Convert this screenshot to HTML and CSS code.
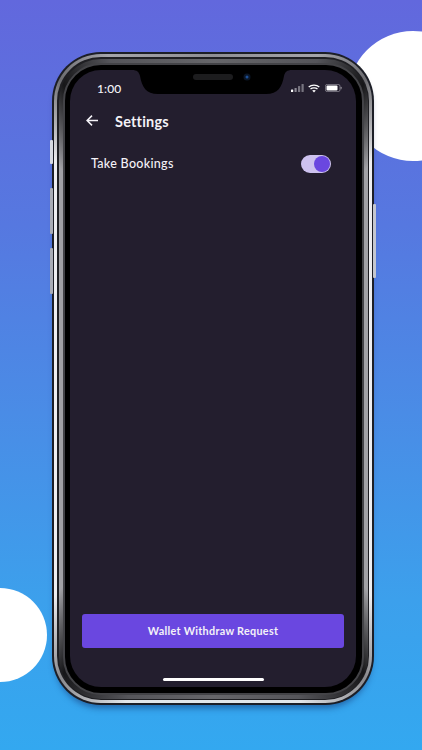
FILE: index.html
```html
<!DOCTYPE html>
<html lang="en">
<head>
<meta charset="utf-8">
<title>Settings</title>
<link rel="stylesheet" href="styles.css">
</head>
<body>
<svg class="backdrop" width="422" height="750" viewBox="0 0 422 750" aria-hidden="true">
  <circle cx="413" cy="96" r="65" fill="#fff"/>
  <circle cx="0" cy="635" r="47" fill="#fff"/>
</svg>
<main class="phone">
  <span class="key key-mute"></span>
  <span class="key key-up"></span>
  <span class="key key-down"></span>
  <span class="key key-power"></span>
  <div class="rim">
    <div class="groove">
      <div class="band">
        <div class="bezel">
          <div class="screen">
            <svg class="notch" viewBox="0 0 160 24" width="160" height="24" aria-hidden="true">
              <path d="M0 0H160C155 0 153 2 152 6C150 17 146 24 134 24H26C14 24 10 17 8 6C7 2 5 0 0 0Z" fill="#000"/>
              <rect x="61" y="4" width="40" height="6" rx="3" fill="#1c1c1e"/>
              <circle cx="115" cy="7" r="3.5" fill="#0b1626"/>
              <circle cx="115" cy="7" r="1.5" fill="#1d4f96"/>
            </svg>
            <div class="status">
              <span class="time">1:00</span>
              <div class="status-icons">
                <svg width="13" height="8" viewBox="0 0 13 8" aria-hidden="true">
                  <rect x="0" y="5.5" width="2.2" height="2.5" rx=".5" fill="#fff"/>
                  <rect x="3.5" y="4" width="2.2" height="4" rx=".5" fill="#8a8792"/>
                  <rect x="7" y="2" width="2.2" height="6" rx=".5" fill="#77747f"/>
                  <rect x="10.5" y="0" width="2.2" height="8" rx=".5" fill="#77747f"/>
                </svg>
                <svg class="wifi" width="12" height="9" viewBox="0 0 12 9" aria-hidden="true">
                  <path d="M.7 3.1C3.6.4 8.4.4 11.3 3.1M2.5 5C4.4 3.4 7.6 3.4 9.5 5" fill="none" stroke="#fff" stroke-width="1.3"/>
                  <path d="M4.2 6.6C5.2 5.8 6.8 5.8 7.8 6.6L6 8.6Z" fill="#fff"/>
                </svg>
                <svg width="17" height="8" viewBox="0 0 17 8" aria-hidden="true">
                  <rect x=".4" y=".4" width="14.6" height="7.2" rx="1.8" fill="none" stroke="#8f8c97" stroke-width=".8"/>
                  <rect x="1.5" y="1.5" width="11" height="5" rx="1" fill="#fff"/>
                  <rect x="15.6" y="2.8" width="1" height="2.4" rx=".5" fill="#8f8c97"/>
                </svg>
              </div>
            </div>
            <header class="topbar">
              <svg class="back" width="12" height="11" viewBox="0 0 12 11" aria-hidden="true">
                <path d="M12 5.5H1.2M6 .6L1.1 5.5L6 10.4" fill="none" stroke="#f4f2f7" stroke-width="1.5"/>
              </svg>
              <h1 class="title">Settings</h1>
            </header>
            <div class="setting">
              <span class="setting-label">Take Bookings</span>
              <span class="toggle"><span class="knob"></span></span>
            </div>
            <div class="action">
              <button class="primary" type="button">Wallet Withdraw Request</button>
            </div>
            <div class="home"></div>
          </div>
        </div>
      </div>
    </div>
  </div>
</main>
</body>
</html>
```
FILE: styles.css
```css
* { box-sizing: border-box; }
html, body { height: 100%; }
body {
  margin: 0;
  height: 750px;
  overflow: hidden;
  position: relative;
  padding: 52px 0 0 52px;
  background: linear-gradient(180deg, #6268dd 0%, #5678e0 30%, #4a8ce6 55%, #3ca0ec 80%, #33a8f0 100%);
  font-family: "Lato", "Liberation Sans", sans-serif;
  color: #f4f2f7;
}
.backdrop { position: absolute; left: 0; top: 0; }

.phone {
  position: relative;
  width: 322px;
  height: 653px;
  padding: 2px;
  border-radius: 49px;
  background: #1c1e26;
  box-shadow: 0 6px 6px -3px rgba(15, 40, 100, .5);
}
.rim {
  height: 100%;
  padding: 3px;
  border-radius: 47px;
  background: conic-gradient(#8f8f94 0deg, #a5a5aa 18deg, #6c6c70 27deg, #eeeef1 36deg, #eeeef1 144deg, #8a8a8e 153deg, #e3e6ea 165deg, #e3e6ea 195deg, #8a8a8e 207deg, #eeeef1 216deg, #eeeef1 324deg, #6c6c70 333deg, #a5a5aa 342deg, #8f8f94 360deg);
}
.groove {
  height: 100%;
  padding: 1.5px;
  border-radius: 44px;
  background: #1e1e22;
}
.band {
  height: 100%;
  padding: 4px;
  border-radius: 42px;
  background: conic-gradient(#66666a 0deg, #55555a 18deg, #161618 27deg, #a2a2a6 36deg, #a2a2a6 144deg, #161618 153deg, #55555a 165deg, #66666a 180deg, #55555a 195deg, #161618 207deg, #a2a2a6 216deg, #a2a2a6 324deg, #161618 333deg, #55555a 342deg, #66666a 360deg);
}
.bezel {
  height: 100%;
  padding: 5.5px;
  border: 2px solid #434347;
  border-radius: 38px;
  background: #000;
}
.screen {
  position: relative;
  height: 100%;
  display: flex;
  flex-direction: column;
  border-radius: 31px;
  background: #231e2e;
  overflow: hidden;
}
.notch { position: absolute; left: 62px; top: 0; }

.key {
  position: absolute;
  width: 3px;
  background: #a9acb6;
  border-radius: 1px;
}
.key-mute { left: -2px; top: 88px; height: 24px; background: #d7dae2; }
.key-up { left: -2px; top: 136px; height: 46px; }
.key-down { left: -2px; top: 196px; height: 46px; }
.key-power { right: -2px; top: 152px; height: 74px; background: #c4c6ce; }

.status {
  display: flex;
  align-items: center;
  justify-content: space-between;
  height: 12px;
  margin-top: 12px;
  padding: 0 14px 0 27px;
}
.time { font-size: 12px; font-weight: 500; letter-spacing: .1px; }
.status-icons { display: flex; align-items: center; gap: 4px; }
.wifi { margin-right: 1px; }

.topbar {
  display: flex;
  align-items: center;
  gap: 17px;
  margin-top: 16px;
  padding-left: 16px;
  height: 22px;
}
.back { margin-top: -2px; }
.title { margin: 0; font-size: 14.5px; font-weight: 700; letter-spacing: .2px; }

.setting {
  display: flex;
  align-items: center;
  justify-content: space-between;
  margin-top: 21px;
  padding: 0 25px 0 21px;
  height: 20px;
}
.setting-label { font-size: 12.5px; font-weight: 500; letter-spacing: .3px; }
.toggle {
  position: relative;
  width: 30px;
  height: 18px;
  margin-top: 2px;
  border-radius: 9px;
  background: #cdc2ef;
}
.knob {
  position: absolute;
  right: 1px;
  top: 1px;
  width: 16px;
  height: 16px;
  border-radius: 50%;
  background: #6a47e0;
}

.action {
  margin-top: auto;
  padding: 0 12px;
}
.primary {
  display: block;
  width: 100%;
  height: 34px;
  padding: 0 0 2px;
  border: 0;
  border-radius: 3px;
  background: #6a47e0;
  color: #f4f2f7;
  font: 700 10.8px "Lato", "Liberation Sans", sans-serif;
  letter-spacing: .3px;
}
.home {
  align-self: center;
  width: 101px;
  height: 3px;
  margin: 30px 0 6px;
  border-radius: 2px;
  background: #fff;
}
```
